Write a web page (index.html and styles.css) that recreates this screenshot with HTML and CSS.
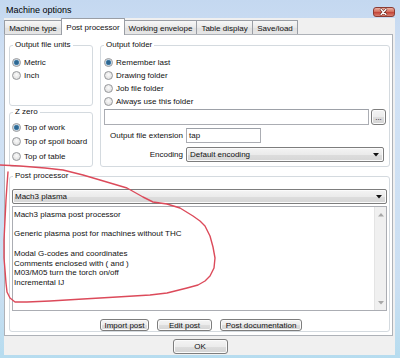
FILE: index.html
```html
<!DOCTYPE html>
<html>
<head>
<meta charset="utf-8">
<link rel="stylesheet" href="styles.css">
</head>
<body>
<div class="window">
  <div class="titlebar">
    <span class="title">Machine options</span>
    <span class="close"><svg width="22" height="10" viewBox="0 0 22 10"><path d="M8.5 2.5 L13.5 7.5 M13.5 2.5 L8.5 7.5" stroke="#6b2a22" stroke-width="2.8" stroke-linecap="round"/><path d="M8.5 2.5 L13.5 7.5 M13.5 2.5 L8.5 7.5" stroke="#fff" stroke-width="1.5" stroke-linecap="round"/></svg></span>
  </div>
  <div class="client">
    <div class="tabs">
      <div class="tab t1">Machine type</div>
      <div class="tab t2 sel">Post processor</div>
      <div class="tab t3">Working envelope</div>
      <div class="tab t4">Table display</div>
      <div class="tab t5">Save/load</div>
    </div>
    <div class="page">
      <div class="toprow">
        <div class="leftcol">
          <div class="group units">
            <span class="legend">Output file units</span>
            <div class="body b-units">
              <div class="radio on"><i></i><span>Metric</span></div>
              <div class="radio"><i></i><span>Inch</span></div>
            </div>
          </div>
          <div class="group zzero">
            <span class="legend">Z zero</span>
            <div class="body b-zzero">
              <div class="radio on"><i></i><span>Top of work</span></div>
              <div class="radio"><i></i><span>Top of spoil board</span></div>
              <div class="radio"><i></i><span>Top of table</span></div>
            </div>
          </div>
        </div>
        <div class="group folder">
          <span class="legend">Output folder</span>
          <div class="body b-folder">
            <div class="radio on"><i></i><span>Remember last</span></div>
            <div class="radio"><i></i><span>Drawing folder</span></div>
            <div class="radio"><i></i><span>Job file folder</span></div>
            <div class="radio"><i></i><span>Always use this folder</span></div>
            <div class="pathrow">
              <div class="tb path"></div>
              <div class="btn dots">...</div>
            </div>
            <div class="fields">
              <span class="lbl">Output file extension</span>
              <div class="tb ext">tap</div>
              <span class="lbl">Encoding</span>
              <div class="combo enc"><span>Default encoding</span><svg width="6" height="4" viewBox="0 0 6 4"><path d="M0 0 H6 L3 3.5 Z" fill="#111"/></svg></div>
            </div>
          </div>
        </div>
      </div>
      <div class="group post">
        <span class="legend">Post processor</span>
        <div class="body b-post">
          <div class="combo pp"><span>Mach3 plasma</span><svg width="6" height="4" viewBox="0 0 6 4"><path d="M0 0 H6 L3 3.5 Z" fill="#111"/></svg></div>
          <div class="memo">
            <div class="txt">
              <div>Mach3 plasma post processor</div>
              <div>&nbsp;</div>
              <div>Generic plasma post for machines without THC</div>
              <div>&nbsp;</div>
              <div>Modal G-codes and coordinates</div>
              <div>Comments enclosed with ( and )</div>
              <div>M03/M05 turn the torch on/off</div>
              <div>Incremental IJ</div>
            </div>
            <div class="sb">
              <svg width="6" height="4" viewBox="0 0 6 4"><path d="M0 3.5 H6 L3 0 Z" fill="#a8a8a8"/></svg>
              <svg width="6" height="4" viewBox="0 0 6 4"><path d="M0 0 H6 L3 3.5 Z" fill="#a8a8a8"/></svg>
            </div>
          </div>
          <div class="btnrow">
            <div class="btn b-import">Import post</div>
            <div class="btn b-edit">Edit post</div>
            <div class="btn b-doc">Post documentation</div>
          </div>
        </div>
      </div>
    </div>
    <div class="footer">
      <div class="btn ok">OK</div>
    </div>
  </div>
  <svg class="annot" width="400" height="358" viewBox="0 0 400 358">
    <path d="M0 165 L20 166 L45 168 L63 170 L83 175 L100 180 L127 188 L143 197 L153 202 L167 204 L180 208 L193 216 L200 221 L205 226 L210 236 L213 247 L215 258 L214 268 L210 276 L205 281 L198 285 L187 288 L167 293 L150 295 L117 297 L83 299 L50 301 L27 302 L15 302 L10 298 L7 292 L6 283 L5 270 L4 258 L4 240 L5 220 L6 200 L7 185 L8 172" fill="none" stroke="#dc4a5a" stroke-width="1.4" stroke-linejoin="round" stroke-linecap="round"/>
  </svg>
</div>
</body>
</html>
```

FILE: styles.css
```css
* { box-sizing: border-box; }
html, body { margin: 0; padding: 0; }
body {
  width: 400px;
  height: 358px;
  overflow: hidden;
  font-family: "Liberation Sans", Arial, sans-serif;
  font-size: 8px;
  color: #111;
}
.window {
  position: relative;
  width: 400px;
  height: 358px;
  background: linear-gradient(#c4d8f0, #d2e2f5 20%, #cbdff2 80%, #b6dcef);
  padding: 0 5px 3px 4px;
  display: flex;
  flex-direction: column;
}
.titlebar {
  height: 18px;
  display: flex;
  justify-content: space-between;
  align-items: flex-start;
  padding-left: 2px;
  flex: none;
}
.title {
  font-size: 9px;
  line-height: 11px;
  margin-top: 5px;
  color: #000;
}
.close {
  width: 22px;
  height: 10px;
  margin-top: 7px;
  border: 1px solid #8b3b33;
  border-radius: 3px;
  background: linear-gradient(#e9b0a3, #d4705f 45%, #c4463a 55%, #d88070);
  display: flex;
}
.close svg { margin: -1px 0 0 -1px; }
.client {
  flex: 1;
  background: #f0f0f0;
  padding-right: 2px;
  display: flex;
  flex-direction: column;
}
.tabs {
  height: 16px;
  display: flex;
  align-items: flex-end;
  flex: none;
}
.tab {
  height: 14px;
  border: 1px solid #9a9ea5;
  border-bottom: none;
  background: linear-gradient(#f7f7f7, #e9e9e9 50%, #e0e0e0 51%, #e6e6e6);
  margin-right: -1px;
  display: flex;
  align-items: center;
  justify-content: center;
  padding-top: 1px;
  white-space: nowrap;
  border-radius: 1px 1px 0 0;
}
.tab.sel {
  height: 17px;
  margin-bottom: -1px;
  background: #fff;
  position: relative;
  z-index: 1;
  padding-top: 0;
}
.t1 { width: 58px; }
.t2 { width: 64px; }
.t3 { width: 73px; }
.t4 { width: 57px; }
.t5 { width: 46px; }
.page {
  height: 302px;
  border: 1px solid #aeb2b8;
  background: #fff;
  padding: 10px 2px 0 4px;
  flex: none;
  display: flex;
  flex-direction: column;
}
.toprow {
  display: flex;
  gap: 7px;
  height: 122px;
}
.leftcol {
  width: 84px;
  display: flex;
  flex-direction: column;
  gap: 6px;
}
.group {
  border: 1px solid #d4dadf;
  border-radius: 3px;
  display: flex;
  flex-direction: column;
}
.units { height: 61px; }
.zzero { height: 55px; }
.folder { width: 290px; height: 122px; }
.post { height: 156px; margin-top: 9px; }
.legend {
  align-self: flex-start;
  margin: -6px 0 0 3px;
  padding: 0 2px;
  height: 10px;
  line-height: 10px;
  background: #fff;
  white-space: nowrap;
}
.b-units { padding: 6px 0 0 2px; }
.b-zzero { padding: 3px 0 0 2px; }
.b-zzero .radio { height: 14.5px; }
.b-folder { padding: 6px 3px 0 3px; }
.b-post { padding: 4px 2px 0 2px; display: flex; flex-direction: column; }
.radio {
  display: flex;
  align-items: center;
  gap: 3px;
  height: 13px;
  white-space: nowrap;
}
.radio i {
  flex: none;
  width: 9px;
  height: 9px;
  border-radius: 50%;
  border: 1px solid #96989b;
  background: radial-gradient(circle at 50% 40%, #fbfbfb, #e2e2e2 70%, #d6d6d6);
}
.radio.on i {
  background: radial-gradient(circle, #2f6790 0 1.6px, #4d88b3 2.3px, #b9cfdf 2.9px, #ececec 3.4px, #f7f7f7 4.5px);
}
.tb {
  border: 1px solid #abadb3;
  border-top-color: #9da1a8;
  background: #fff;
}
.pathrow {
  display: flex;
  gap: 2px;
  margin-top: 1px;
  height: 16px;
}
.path { flex: 1; }
.btn {
  border: 1px solid #7d7d7d;
  border-radius: 3px;
  background: linear-gradient(#f4f4f4, #ececec 50%, #dedede 51%, #d3d3d3);
  box-shadow: inset 0 0 0 1px #fbfbfb;
  display: flex;
  align-items: center;
  justify-content: center;
  white-space: nowrap;
}
.dots {
  width: 15px;
  align-items: flex-end;
  padding-bottom: 2px;
  line-height: 8px;
}
.fields {
  display: grid;
  grid-template-columns: 79px 1fr;
  column-gap: 3px;
  row-gap: 4px;
  margin-top: 3px;
  align-items: center;
}
.lbl { text-align: right; white-space: nowrap; }
.ext {
  width: 75px;
  height: 15px;
  padding-left: 2px;
  line-height: 13px;
}
.combo {
  height: 15px;
  border: 1px solid #7d7d7d;
  border-radius: 2px;
  background: linear-gradient(#f4f4f4, #ebebeb 50%, #dddddd 51%, #d6d6d6);
  box-shadow: inset 0 0 0 1px #fbfbfb;
  display: flex;
  align-items: center;
  justify-content: space-between;
  padding: 0 4px 0 3px;
}
.enc { width: 198px; }
.pp { margin-top: 4px; padding-left: 2px; }
.memo {
  margin-top: 2px;
  height: 105px;
  border: 1px solid #abadb3;
  display: flex;
  background: #fff;
}
.txt {
  flex: 1;
  padding: 3px 0 0 1px;
  line-height: 9.7px;
  white-space: nowrap;
}
.sb {
  width: 12px;
  background: #f0f0f0;
  border-left: 1px solid #e4e4e4;
  display: flex;
  flex-direction: column;
  justify-content: space-between;
  align-items: center;
  padding: 6px 0 5px;
}
.btnrow {
  display: flex;
  justify-content: center;
  gap: 8px;
  margin-top: 8px;
  padding-left: 3px;
}
.btnrow .btn { height: 12px; }
.b-import { width: 49px; }
.b-edit { width: 55px; }
.b-doc { width: 82px; }
.footer {
  flex: 1;
  display: flex;
  justify-content: center;
  padding: 3px 0 0 3px;
}
.ok { width: 55px; height: 15px; }
.annot {
  position: absolute;
  left: 0;
  top: 0;
  pointer-events: none;
}
```
